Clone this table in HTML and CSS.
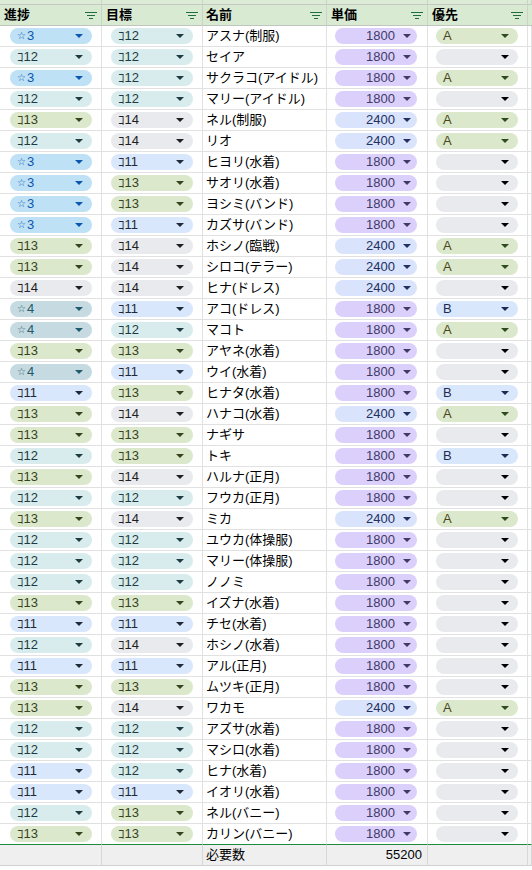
FILE: index.html
```html
<!DOCTYPE html>
<html lang="ja">
<head>
<meta charset="utf-8">
<title>進捗表</title>
<link rel="stylesheet" href="styles.css">
</head>
<body>
<div class="sheet">
  <div class="row band"><div class="c"></div><div class="c"></div><div class="c"></div><div class="c"></div><div class="c"></div><div class="c"></div></div>
  <div class="row head">
    <div class="c c1"><span>進捗</span><svg class="flt" viewBox="0 0 12 7"><path d="M0 0.5h12M2 3.5h8M4 6.5h4"/></svg></div>
    <div class="c c2"><span>目標</span><svg class="flt" viewBox="0 0 12 7"><path d="M0 0.5h12M2 3.5h8M4 6.5h4"/></svg></div>
    <div class="c c3"><span>名前</span><svg class="flt" viewBox="0 0 12 7"><path d="M0 0.5h12M2 3.5h8M4 6.5h4"/></svg></div>
    <div class="c c4"><span>単価</span><svg class="flt" viewBox="0 0 12 7"><path d="M0 0.5h12M2 3.5h8M4 6.5h4"/></svg></div>
    <div class="c c5"><span>優先</span><svg class="flt" viewBox="0 0 12 7"><path d="M0 0.5h12M2 3.5h8M4 6.5h4"/></svg></div>
    <div class="c"></div>
  </div>

  <div class="row"><div class="c c1"><span class="chip s3"><span><span class="star">☆</span>3</span></span></div><div class="c c2"><span class="chip k2">ｺ12</span></div><div class="c c3">アスナ(制服)</div><div class="c c4"><span class="chip num p18">1800</span></div><div class="c c5"><span class="chip pa">A</span></div><div class="c"></div></div>
  <div class="row"><div class="c c1"><span class="chip k2">ｺ12</span></div><div class="c c2"><span class="chip k2">ｺ12</span></div><div class="c c3">セイア</div><div class="c c4"><span class="chip num p18">1800</span></div><div class="c c5"><span class="chip pn"></span></div><div class="c"></div></div>
  <div class="row"><div class="c c1"><span class="chip s3"><span><span class="star">☆</span>3</span></span></div><div class="c c2"><span class="chip k2">ｺ12</span></div><div class="c c3">サクラコ(アイドル)</div><div class="c c4"><span class="chip num p18">1800</span></div><div class="c c5"><span class="chip pa">A</span></div><div class="c"></div></div>
  <div class="row"><div class="c c1"><span class="chip k2">ｺ12</span></div><div class="c c2"><span class="chip k2">ｺ12</span></div><div class="c c3">マリー(アイドル)</div><div class="c c4"><span class="chip num p18">1800</span></div><div class="c c5"><span class="chip pn"></span></div><div class="c"></div></div>
  <div class="row"><div class="c c1"><span class="chip k3">ｺ13</span></div><div class="c c2"><span class="chip k4">ｺ14</span></div><div class="c c3">ネル(制服)</div><div class="c c4"><span class="chip num p24">2400</span></div><div class="c c5"><span class="chip pa">A</span></div><div class="c"></div></div>
  <div class="row"><div class="c c1"><span class="chip k2">ｺ12</span></div><div class="c c2"><span class="chip k4">ｺ14</span></div><div class="c c3">リオ</div><div class="c c4"><span class="chip num p24">2400</span></div><div class="c c5"><span class="chip pa">A</span></div><div class="c"></div></div>
  <div class="row"><div class="c c1"><span class="chip s3"><span><span class="star">☆</span>3</span></span></div><div class="c c2"><span class="chip k1">ｺ11</span></div><div class="c c3">ヒヨリ(水着)</div><div class="c c4"><span class="chip num p18">1800</span></div><div class="c c5"><span class="chip pn"></span></div><div class="c"></div></div>
  <div class="row"><div class="c c1"><span class="chip s3"><span><span class="star">☆</span>3</span></span></div><div class="c c2"><span class="chip k3">ｺ13</span></div><div class="c c3">サオリ(水着)</div><div class="c c4"><span class="chip num p18">1800</span></div><div class="c c5"><span class="chip pn"></span></div><div class="c"></div></div>
  <div class="row"><div class="c c1"><span class="chip s3"><span><span class="star">☆</span>3</span></span></div><div class="c c2"><span class="chip k3">ｺ13</span></div><div class="c c3">ヨシミ(バンド)</div><div class="c c4"><span class="chip num p18">1800</span></div><div class="c c5"><span class="chip pn"></span></div><div class="c"></div></div>
  <div class="row"><div class="c c1"><span class="chip s3"><span><span class="star">☆</span>3</span></span></div><div class="c c2"><span class="chip k1">ｺ11</span></div><div class="c c3">カズサ(バンド)</div><div class="c c4"><span class="chip num p18">1800</span></div><div class="c c5"><span class="chip pn"></span></div><div class="c"></div></div>
  <div class="row"><div class="c c1"><span class="chip k3">ｺ13</span></div><div class="c c2"><span class="chip k4">ｺ14</span></div><div class="c c3">ホシノ(臨戦)</div><div class="c c4"><span class="chip num p24">2400</span></div><div class="c c5"><span class="chip pa">A</span></div><div class="c"></div></div>
  <div class="row"><div class="c c1"><span class="chip k3">ｺ13</span></div><div class="c c2"><span class="chip k4">ｺ14</span></div><div class="c c3">シロコ(テラー)</div><div class="c c4"><span class="chip num p24">2400</span></div><div class="c c5"><span class="chip pa">A</span></div><div class="c"></div></div>
  <div class="row"><div class="c c1"><span class="chip k4">ｺ14</span></div><div class="c c2"><span class="chip k4">ｺ14</span></div><div class="c c3">ヒナ(ドレス)</div><div class="c c4"><span class="chip num p24">2400</span></div><div class="c c5"><span class="chip pn"></span></div><div class="c"></div></div>
  <div class="row"><div class="c c1"><span class="chip s4"><span><span class="star">☆</span>4</span></span></div><div class="c c2"><span class="chip k1">ｺ11</span></div><div class="c c3">アコ(ドレス)</div><div class="c c4"><span class="chip num p18">1800</span></div><div class="c c5"><span class="chip pb">B</span></div><div class="c"></div></div>
  <div class="row"><div class="c c1"><span class="chip s4"><span><span class="star">☆</span>4</span></span></div><div class="c c2"><span class="chip k2">ｺ12</span></div><div class="c c3">マコト</div><div class="c c4"><span class="chip num p18">1800</span></div><div class="c c5"><span class="chip pa">A</span></div><div class="c"></div></div>
  <div class="row"><div class="c c1"><span class="chip k3">ｺ13</span></div><div class="c c2"><span class="chip k3">ｺ13</span></div><div class="c c3">アヤネ(水着)</div><div class="c c4"><span class="chip num p18">1800</span></div><div class="c c5"><span class="chip pn"></span></div><div class="c"></div></div>
  <div class="row"><div class="c c1"><span class="chip s4"><span><span class="star">☆</span>4</span></span></div><div class="c c2"><span class="chip k1">ｺ11</span></div><div class="c c3">ウイ(水着)</div><div class="c c4"><span class="chip num p18">1800</span></div><div class="c c5"><span class="chip pn"></span></div><div class="c"></div></div>
  <div class="row"><div class="c c1"><span class="chip k1">ｺ11</span></div><div class="c c2"><span class="chip k3">ｺ13</span></div><div class="c c3">ヒナタ(水着)</div><div class="c c4"><span class="chip num p18">1800</span></div><div class="c c5"><span class="chip pb">B</span></div><div class="c"></div></div>
  <div class="row"><div class="c c1"><span class="chip k3">ｺ13</span></div><div class="c c2"><span class="chip k4">ｺ14</span></div><div class="c c3">ハナコ(水着)</div><div class="c c4"><span class="chip num p24">2400</span></div><div class="c c5"><span class="chip pa">A</span></div><div class="c"></div></div>
  <div class="row"><div class="c c1"><span class="chip k3">ｺ13</span></div><div class="c c2"><span class="chip k3">ｺ13</span></div><div class="c c3">ナギサ</div><div class="c c4"><span class="chip num p18">1800</span></div><div class="c c5"><span class="chip pn"></span></div><div class="c"></div></div>
  <div class="row"><div class="c c1"><span class="chip k2">ｺ12</span></div><div class="c c2"><span class="chip k3">ｺ13</span></div><div class="c c3">トキ</div><div class="c c4"><span class="chip num p18">1800</span></div><div class="c c5"><span class="chip pb">B</span></div><div class="c"></div></div>
  <div class="row"><div class="c c1"><span class="chip k3">ｺ13</span></div><div class="c c2"><span class="chip k4">ｺ14</span></div><div class="c c3">ハルナ(正月)</div><div class="c c4"><span class="chip num p18">1800</span></div><div class="c c5"><span class="chip pn"></span></div><div class="c"></div></div>
  <div class="row"><div class="c c1"><span class="chip k2">ｺ12</span></div><div class="c c2"><span class="chip k2">ｺ12</span></div><div class="c c3">フウカ(正月)</div><div class="c c4"><span class="chip num p18">1800</span></div><div class="c c5"><span class="chip pn"></span></div><div class="c"></div></div>
  <div class="row"><div class="c c1"><span class="chip k3">ｺ13</span></div><div class="c c2"><span class="chip k4">ｺ14</span></div><div class="c c3">ミカ</div><div class="c c4"><span class="chip num p24">2400</span></div><div class="c c5"><span class="chip pa">A</span></div><div class="c"></div></div>
  <div class="row"><div class="c c1"><span class="chip k2">ｺ12</span></div><div class="c c2"><span class="chip k2">ｺ12</span></div><div class="c c3">ユウカ(体操服)</div><div class="c c4"><span class="chip num p18">1800</span></div><div class="c c5"><span class="chip pn"></span></div><div class="c"></div></div>
  <div class="row"><div class="c c1"><span class="chip k2">ｺ12</span></div><div class="c c2"><span class="chip k2">ｺ12</span></div><div class="c c3">マリー(体操服)</div><div class="c c4"><span class="chip num p18">1800</span></div><div class="c c5"><span class="chip pn"></span></div><div class="c"></div></div>
  <div class="row"><div class="c c1"><span class="chip k2">ｺ12</span></div><div class="c c2"><span class="chip k2">ｺ12</span></div><div class="c c3">ノノミ</div><div class="c c4"><span class="chip num p18">1800</span></div><div class="c c5"><span class="chip pn"></span></div><div class="c"></div></div>
  <div class="row"><div class="c c1"><span class="chip k3">ｺ13</span></div><div class="c c2"><span class="chip k3">ｺ13</span></div><div class="c c3">イズナ(水着)</div><div class="c c4"><span class="chip num p18">1800</span></div><div class="c c5"><span class="chip pn"></span></div><div class="c"></div></div>
  <div class="row"><div class="c c1"><span class="chip k1">ｺ11</span></div><div class="c c2"><span class="chip k1">ｺ11</span></div><div class="c c3">チセ(水着)</div><div class="c c4"><span class="chip num p18">1800</span></div><div class="c c5"><span class="chip pn"></span></div><div class="c"></div></div>
  <div class="row"><div class="c c1"><span class="chip k2">ｺ12</span></div><div class="c c2"><span class="chip k4">ｺ14</span></div><div class="c c3">ホシノ(水着)</div><div class="c c4"><span class="chip num p18">1800</span></div><div class="c c5"><span class="chip pn"></span></div><div class="c"></div></div>
  <div class="row"><div class="c c1"><span class="chip k1">ｺ11</span></div><div class="c c2"><span class="chip k1">ｺ11</span></div><div class="c c3">アル(正月)</div><div class="c c4"><span class="chip num p18">1800</span></div><div class="c c5"><span class="chip pn"></span></div><div class="c"></div></div>
  <div class="row"><div class="c c1"><span class="chip k3">ｺ13</span></div><div class="c c2"><span class="chip k3">ｺ13</span></div><div class="c c3">ムツキ(正月)</div><div class="c c4"><span class="chip num p18">1800</span></div><div class="c c5"><span class="chip pn"></span></div><div class="c"></div></div>
  <div class="row"><div class="c c1"><span class="chip k3">ｺ13</span></div><div class="c c2"><span class="chip k4">ｺ14</span></div><div class="c c3">ワカモ</div><div class="c c4"><span class="chip num p24">2400</span></div><div class="c c5"><span class="chip pa">A</span></div><div class="c"></div></div>
  <div class="row"><div class="c c1"><span class="chip k2">ｺ12</span></div><div class="c c2"><span class="chip k2">ｺ12</span></div><div class="c c3">アズサ(水着)</div><div class="c c4"><span class="chip num p18">1800</span></div><div class="c c5"><span class="chip pn"></span></div><div class="c"></div></div>
  <div class="row"><div class="c c1"><span class="chip k2">ｺ12</span></div><div class="c c2"><span class="chip k2">ｺ12</span></div><div class="c c3">マシロ(水着)</div><div class="c c4"><span class="chip num p18">1800</span></div><div class="c c5"><span class="chip pn"></span></div><div class="c"></div></div>
  <div class="row"><div class="c c1"><span class="chip k1">ｺ11</span></div><div class="c c2"><span class="chip k2">ｺ12</span></div><div class="c c3">ヒナ(水着)</div><div class="c c4"><span class="chip num p18">1800</span></div><div class="c c5"><span class="chip pn"></span></div><div class="c"></div></div>
  <div class="row"><div class="c c1"><span class="chip k1">ｺ11</span></div><div class="c c2"><span class="chip k1">ｺ11</span></div><div class="c c3">イオリ(水着)</div><div class="c c4"><span class="chip num p18">1800</span></div><div class="c c5"><span class="chip pn"></span></div><div class="c"></div></div>
  <div class="row"><div class="c c1"><span class="chip k2">ｺ12</span></div><div class="c c2"><span class="chip k3">ｺ13</span></div><div class="c c3">ネル(バニー)</div><div class="c c4"><span class="chip num p18">1800</span></div><div class="c c5"><span class="chip pn"></span></div><div class="c"></div></div>
  <div class="row last"><div class="c c1"><span class="chip k3">ｺ13</span></div><div class="c c2"><span class="chip k3">ｺ13</span></div><div class="c c3">カリン(バニー)</div><div class="c c4"><span class="chip num p18">1800</span></div><div class="c c5"><span class="chip pn"></span></div><div class="c"></div></div>

  <div class="row foot"><div class="c c1"></div><div class="c c2"></div><div class="c c3">必要数</div><div class="c c4 total">55200</div><div class="c c5"></div><div class="c"></div></div>
</div>
</body>
</html>
```

FILE: styles.css
```css
html, body {
  margin: 0;
  padding: 0;
  background: #ffffff;
}

body {
  font-family: "Liberation Sans", "Noto Sans CJK JP", sans-serif;
  font-size: 13px;
  color: #000;
  width: 532px;
  height: 870px;
  overflow: hidden;
}

.sheet {
  display: flex;
  flex-direction: column;
}

.row {
  display: grid;
  grid-template-columns: 102px 101px 124px 101px 100px 1fr;
  height: 21px;
}

.c {
  box-sizing: border-box;
  border-right: 1px solid #e1e1e1;
  border-bottom: 1px solid #e1e1e1;
  display: flex;
  align-items: center;
  min-width: 0;
  white-space: nowrap;
  overflow: hidden;
  line-height: 20px;
}

.band {
  height: 5px;
}
.band .c {
  background: #dcebd6;
  border-bottom-color: #c4c9c3;
  border-right-color: #c9d3c6;
}

.head .c {
  background: #d9ead3;
  font-weight: bold;
  border-bottom-color: #c0c6bf;
  border-right-color: #c9d3c6;
  justify-content: space-between;
  padding-left: 4px;
  padding-right: 4px;
}
.head .c3 {
  padding-left: 3px;
}

.flt {
  width: 12px;
  height: 7px;
  flex: none;
  margin-top: 1px;
}
.flt path {
  stroke: #1f6e3c;
  stroke-width: 1.2;
  fill: none;
}

.c1 { padding-left: 10px; }
.c2 { padding-left: 9px; }
.c3 { padding-left: 3px; }
.c4 { padding-left: 8px; }
.c5 { padding-left: 8px; }

.chip {
  box-sizing: border-box;
  width: 82px;
  height: 16px;
  border-radius: 8px;
  display: flex;
  align-items: center;
  justify-content: space-between;
  padding: 0 9px 0 7px;
  line-height: 16px;
  font-size: 13px;
  flex: none;
}
.chip::after {
  content: "";
  width: 0;
  height: 0;
  border-left: 4px solid transparent;
  border-right: 4px solid transparent;
  border-top: 4px solid currentColor;
  margin-left: auto;
  flex: none;
}
.chip.num {
  justify-content: flex-end;
  padding-right: 6px;
}
.chip.num::after {
  margin-left: 8px;
}

.star {
  font-family: "DejaVu Sans", sans-serif;
  font-size: 10px;
  margin-right: 1px;
  position: relative;
  top: -1px;
}

.s3 { background: #bfe1f6; color: #0b57b0; }
.s4 { background: #c6dbe1; color: #215a6c; }
.k1 { background: #d9e7fc; color: #1f2937; }
.k2 { background: #d8ecee; color: #1d3b40; }
.k3 { background: #dbe8cc; color: #36431d; }
.k4 { background: #e8eaed; color: #1f1f1f; }
.p18 { background: #dad0fb; color: #3f3a66; }
.p24 { background: #d9e3fc; color: #233060; }
.pa { background: #dbe8cc; color: #4a4618; }
.pa::after { border-top-color: #2f4a1f; }
.pb { background: #d9e7fc; color: #1d2b52; }
.pn { background: #e8eaed; color: #000; }

.last .c {
  border-bottom-color: #1e8a3e;
}

.foot .c {
  background: #efefef;
  border-bottom-color: #d0d0d0;
  border-right-color: #d7d7d7;
}
.foot .total {
  justify-content: flex-end;
  padding-right: 5px;
}
```
